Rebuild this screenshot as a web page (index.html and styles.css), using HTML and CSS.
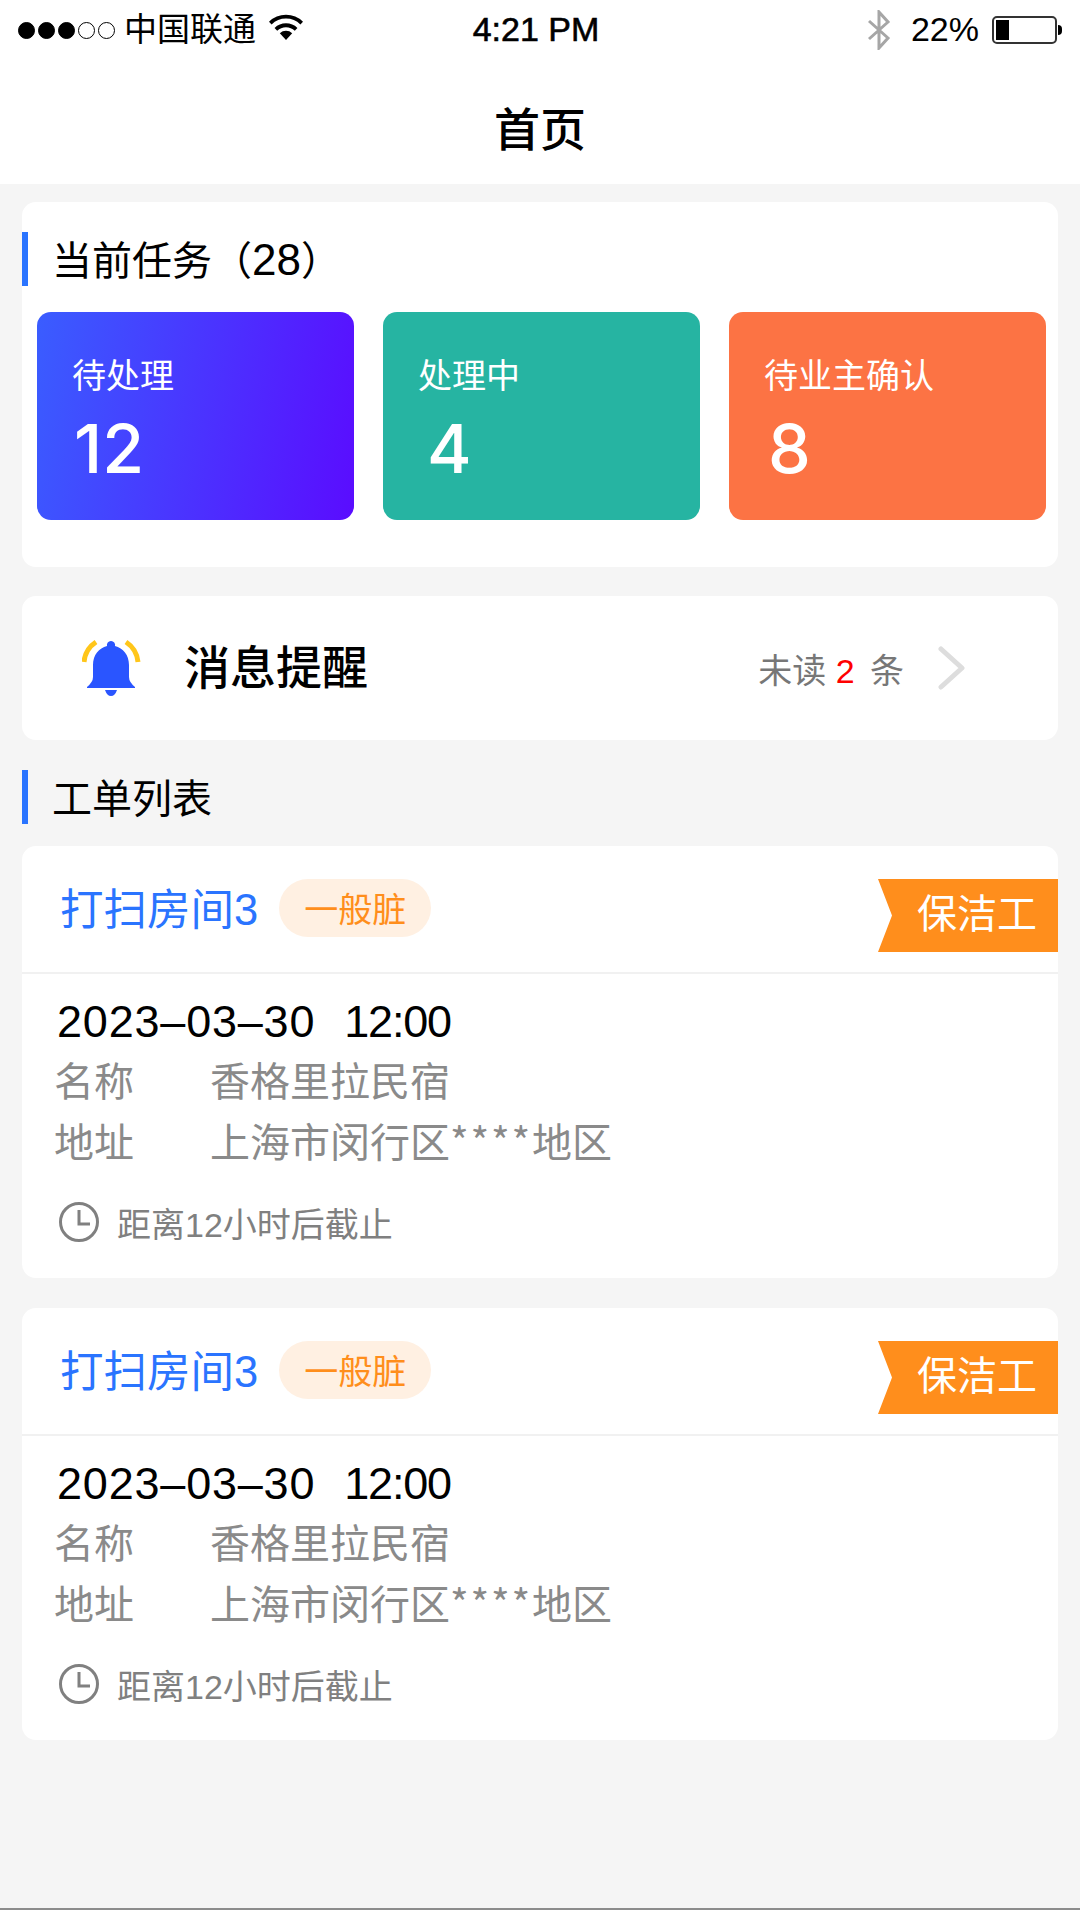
FILE: index.html
```html
<!DOCTYPE html>
<html lang="zh-CN">
<head>
  <meta charset="UTF-8">
  <meta name="viewport" content="width=device-width, initial-scale=1.0">
  <title>首页</title>
  <link rel="stylesheet" href="styles.css">
</head>
<body>
  <div class="screen">
    <!-- Status bar -->
    <div class="status-bar">
      <div class="status-left">
        <div class="signal">
          <i class="dot on"></i><i class="dot on"></i><i class="dot on"></i><i class="dot"></i><i class="dot"></i>
        </div>
        <span class="carrier">中国联通</span>
        <svg class="wifi" viewBox="0 0 30 24" width="34" height="27">
          <path d="M1 9 A20 20 0 0 1 29 9" fill="none" stroke="#000" stroke-width="3.4"/>
          <path d="M6 14.500 A13 13 0 0 1 24 14.500" fill="none" stroke="#000" stroke-width="3.4"/>
          <path d="M15 24 L9.500 18 A8 8 0 0 1 20.500 18 Z" fill="#000"/>
        </svg>
      </div>
      <div class="status-time">4:21 PM</div>
      <div class="status-right">
        <svg class="bluetooth" viewBox="0 0 24 40" width="24" height="40">
          <path d="M2 11 L21 28 L12 38 L12 2 L21 12 L2 29" fill="none" stroke="#a6a6a6" stroke-width="3"/>
        </svg>
        <span class="battery-text">22%</span>
        <div class="battery"><div class="battery-level"></div></div>
        <div class="battery-cap"></div>
      </div>
    </div>

    <div class="nav-bar">首页</div>

    <div class="content">
      <div class="panel tasks">
        <div class="section-title">当前任务（<span class="title-num">28</span>）</div>
        <div class="stats">
          <div class="stat stat-blue">
            <div class="stat-label">待处理</div>
            <div class="stat-value">12</div>
          </div>
          <div class="stat stat-green">
            <div class="stat-label">处理中</div>
            <div class="stat-value">4</div>
          </div>
          <div class="stat stat-orange">
            <div class="stat-label">待业主确认</div>
            <div class="stat-value">8</div>
          </div>
        </div>
      </div>

      <div class="panel notice">
        <svg class="bell" viewBox="0 0 60 60" width="60" height="60">
          <path d="M14 4 A27 27 0 0 0 2 24" fill="none" stroke="#ffc61a" stroke-width="5"/>
          <path d="M44 4 A27 27 0 0 1 56 24" fill="none" stroke="#ffc61a" stroke-width="5"/>
          <path d="M29 3 a4 4 0 0 1 4 5 C41 10 47 17 47 27 V39 Q47 44 53 49 V50 H5 V49 Q11 44 11 39 V27 C11 17 17 10 25 8 A4 4 0 0 1 29 3 Z" fill="#2a55ff"/>
          <path d="M23 52 H35 Q33 58 29 58 Q25 58 23 52 Z" fill="#2a55ff"/>
        </svg>
        <div class="notice-title">消息提醒</div>
        <div class="notice-count">未读 <span class="unread">2</span> 条</div>
        <svg class="chevron" viewBox="0 0 28 44" width="28" height="44">
          <path d="M3 3 L24 22 L3 41" fill="none" stroke="#dddddd" stroke-width="5" stroke-linecap="round" stroke-linejoin="round"/>
        </svg>
      </div>

      <div class="section-title list-title">工单列表</div>

      <div class="panel order">
        <div class="order-head">
          <span class="order-name">打扫房间3</span>
          <span class="pill">一般脏</span>
          <span class="role-tag">保洁工</span>
        </div>
        <div class="order-body">
          <div class="order-date">2023–03–30<span class="order-time">12:00</span></div>
          <div class="order-row"><span class="order-key">名称</span><span>香格里拉民宿</span></div>
          <div class="order-row"><span class="order-key">地址</span><span>上海市闵行区<span class="stars">****</span>地区</span></div>
          <div class="order-deadline">
            <svg viewBox="0 0 40 42" width="40" height="42">
              <circle cx="20" cy="21" r="18.500" fill="none" stroke="#808080" stroke-width="3"/>
              <path d="M20 9 V23 H31" fill="none" stroke="#808080" stroke-width="3"/>
            </svg>
            <span class="deadline-text">距离12小时后截止</span>
          </div>
        </div>
      </div>

      <div class="panel order">
        <div class="order-head">
          <span class="order-name">打扫房间3</span>
          <span class="pill">一般脏</span>
          <span class="role-tag">保洁工</span>
        </div>
        <div class="order-body">
          <div class="order-date">2023–03–30<span class="order-time">12:00</span></div>
          <div class="order-row"><span class="order-key">名称</span><span>香格里拉民宿</span></div>
          <div class="order-row"><span class="order-key">地址</span><span>上海市闵行区<span class="stars">****</span>地区</span></div>
          <div class="order-deadline">
            <svg viewBox="0 0 40 42" width="40" height="42">
              <circle cx="20" cy="21" r="18.500" fill="none" stroke="#808080" stroke-width="3"/>
              <path d="M20 9 V23 H31" fill="none" stroke="#808080" stroke-width="3"/>
            </svg>
            <span class="deadline-text">距离12小时后截止</span>
          </div>
        </div>
      </div>
    </div>

    <div class="bottom-line"></div>
  </div>
</body>
</html>
```

FILE: styles.css
```css
body {
  margin: 0;
  font-family: "Liberation Sans", "Noto Sans CJK SC", sans-serif;
  color: #000;
  background-color: #fff;
}

.screen {
  width: 1080px;
  height: 1920px;
  display: flex;
  flex-direction: column;
  overflow: hidden;
}

/* Status bar */
.status-bar {
  height: 60px;
  flex: none;
  display: grid;
  grid-template-columns: 1fr auto 1fr;
  align-items: center;
  padding: 0 18px;
  font-size: 33px;
}

.status-left, .status-right {
  display: flex;
  align-items: center;
}

.status-right {
  justify-content: flex-end;
}

.signal {
  display: flex;
  gap: 3px;
  margin-right: 9px;
}

.dot {
  width: 17px;
  height: 17px;
  box-sizing: border-box;
  border: 1.500px solid #000;
  border-radius: 50%;
}

.dot.on {
  background-color: #000;
}

.carrier {
  margin-right: 13px;
  margin-bottom: 6px;
}

.wifi {
  margin-bottom: 8px;
}

.status-time {
  font-size: 34px;
  -webkit-text-stroke: 0.6px #000;
  margin-right: 8px;
  margin-top: -2px;
}

.bluetooth {
  margin-right: 20px;
}

.battery-text {
  font-size: 34px;
  margin-right: 13px;
  margin-top: -2px;
}

.battery {
  width: 65px;
  height: 28px;
  box-sizing: border-box;
  border: 2px solid #333;
  border-radius: 5px;
  padding: 2px;
}

.battery-level {
  width: 13px;
  height: 100%;
  background-color: #000;
}

.battery-cap {
  width: 4px;
  height: 10px;
  background-color: #000;
  border-radius: 0 5px 5px 0;
  margin-left: 1px;
}

/* Nav bar */
.nav-bar {
  height: 124px;
  flex: none;
  display: flex;
  align-items: center;
  justify-content: center;
  font-size: 46px;
  font-weight: 500;
  padding-top: 8px;
  box-sizing: border-box;
}

.content {
  flex: 1;
  background-color: #f5f5f5;
  padding: 18px 22px 0;
}

.panel {
  background-color: #fff;
  border-radius: 14px;
}

.section-title {
  height: 54px;
  line-height: 59px;
  border-left: 6px solid #2a74ff;
  padding-left: 24px;
  font-size: 40px;
}

.tasks .section-title {
  line-height: 55px;
}

.title-num {
  font-size: 44px;
}

/* Current tasks */
.tasks {
  height: 365px;
  box-sizing: border-box;
  padding-top: 30px;
}

.stats {
  display: grid;
  grid-template-columns: repeat(3, 317px);
  gap: 29px;
  padding: 26px 12px 0 15px;
}

.stat {
  height: 208px;
  box-sizing: border-box;
  border-radius: 14px;
  color: #fff;
  padding: 42px 35px 0;
}

.stat-blue {
  background: linear-gradient(100deg, #3a5dff, #5a0cff);
}

.stat-green {
  background-color: #26b4a2;
}

.stat-orange {
  background-color: #fc7344;
}

.stat-label {
  font-size: 34px;
  line-height: 44px;
}

.stat-value {
  font-family: Inter, "Liberation Sans", sans-serif;
  font-weight: 500;
  font-size: 68px;
  line-height: 80px;
  margin-top: 10px;
  margin-left: 2px;
}

.stat-green .stat-value {
  margin-left: 9px;
}

.stat-orange .stat-value {
  margin-left: 4px;
}

/* Message row */
.notice {
  height: 144px;
  margin-top: 29px;
  display: flex;
  align-items: center;
  padding: 0 92px 0 60px;
}

.bell {
  margin-right: 42px;
}

.notice-title {
  font-size: 46px;
  font-weight: 500;
  flex: 1;
  padding-bottom: 8px;
}

.notice-count {
  font-size: 34px;
  color: #777;
  margin-right: 34px;
}

.unread {
  color: #ff0000;
  margin-right: 6px;
}

/* Work orders */
.list-title {
  margin-top: 30px;
  margin-bottom: 22px;
}

.order {
  height: 432px;
  margin-bottom: 30px;
  box-sizing: border-box;
  padding-top: 33px;
}

.order-head {
  height: 93px;
  display: flex;
  align-items: flex-start;
  padding-left: 38px;
  border-bottom: 2px solid #f1f1f1;
}

.order-name {
  font-size: 43.500px;
  line-height: 62px;
  color: #2a74ff;
}

.pill {
  height: 58px;
  line-height: 62px;
  margin-left: 21px;
  padding: 0 25px;
  border-radius: 29px;
  background-color: #fff0e2;
  color: #ff8e1c;
  font-size: 34px;
}

.role-tag {
  margin-left: auto;
  width: 180px;
  height: 73px;
  line-height: 70px;
  box-sizing: border-box;
  padding-left: 39px;
  background-color: #ff8e1c;
  color: #fff;
  font-size: 40px;
  clip-path: polygon(0 0, 100% 0, 100% 100%, 0 100%, 14px 50%);
}

.order-body {
  padding: 17px 32px 0;
}

.order-date {
  font-size: 45px;
  line-height: 61px;
  margin-left: 3px;
  letter-spacing: 0.8px;
}

.order-time {
  margin-left: 29px;
  letter-spacing: -1.200px;
}

.order-row {
  display: flex;
  font-size: 40px;
  line-height: 61px;
  color: #8a8a8a;
}

.stars {
  font-family: "Noto Sans CJK SC", sans-serif;
  line-height: 0;
  letter-spacing: 1.800px;
}

.order-key {
  width: 156px;
}

.order-deadline {
  display: flex;
  align-items: center;
  gap: 18px;
  margin: 22px 0 0 5px;
  font-size: 34px;
  color: #808080;
}

.deadline-text {
  padding-top: 2px;
}

.bottom-line {
  height: 12px;
  flex: none;
  border-top: 2px solid #8c8c8c;
  box-sizing: border-box;
}
```
